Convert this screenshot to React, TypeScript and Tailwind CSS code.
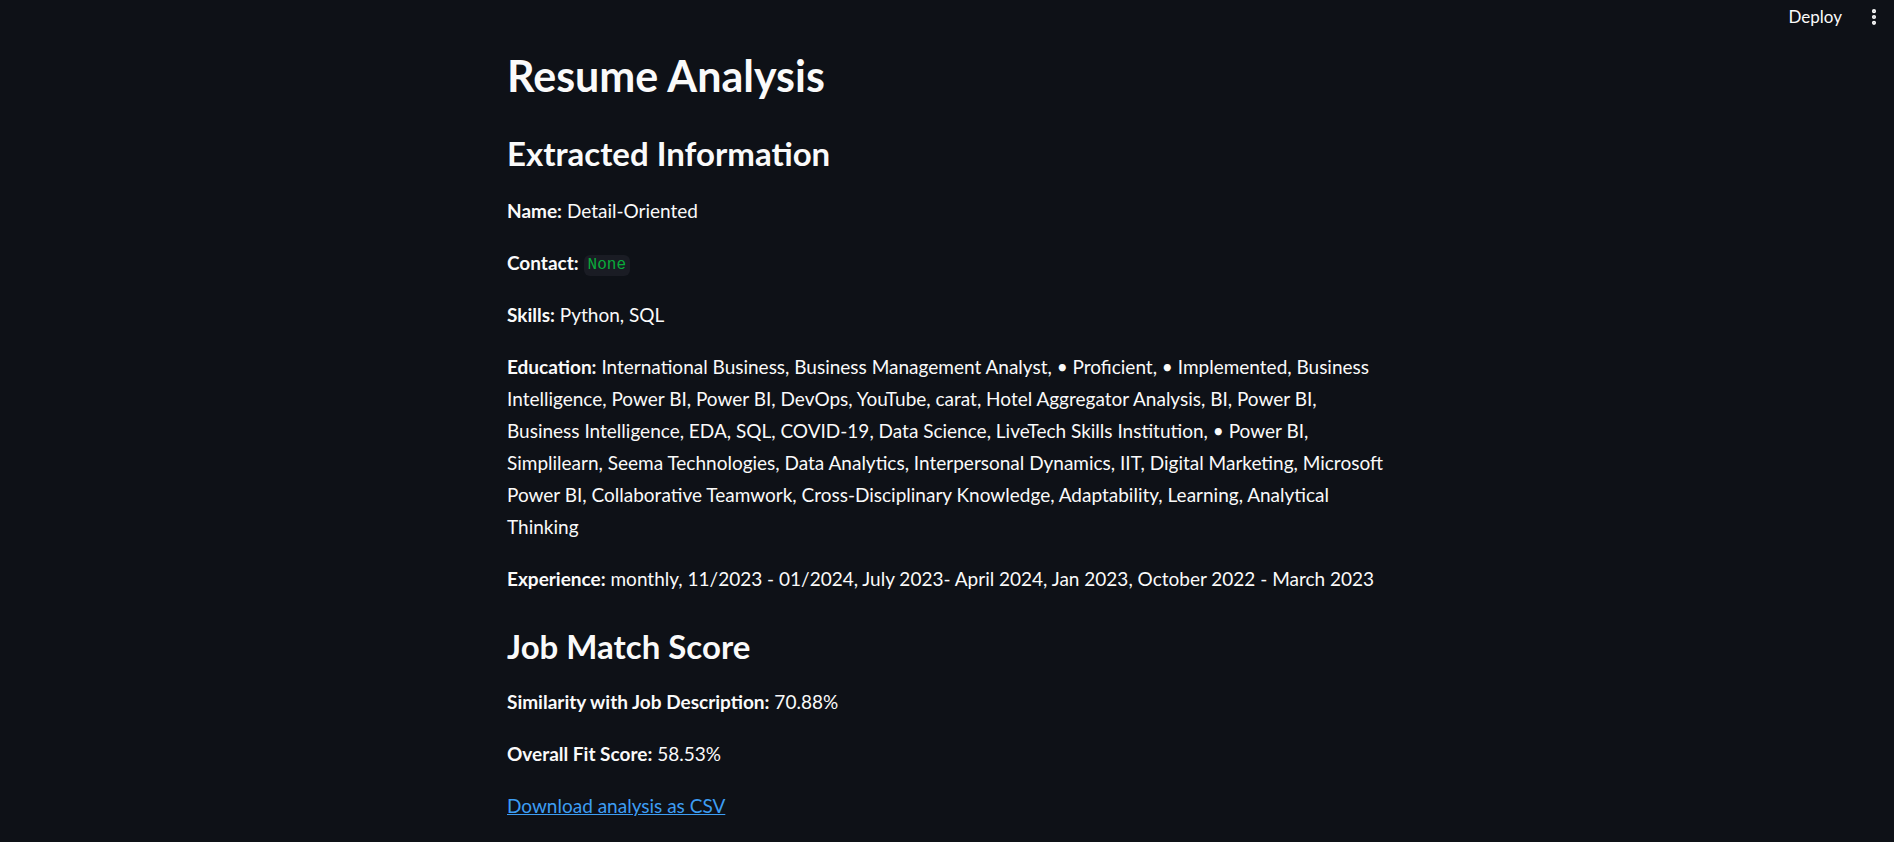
import { EllipsisVertical } from "lucide-react";

const font = { fontFamily: "Lato, 'Noto Sans', sans-serif" };

function Field({ label, children }: { label: string; children: React.ReactNode }) {
  return (
    <p className="text-[19px] leading-[32px] mb-[20px]">
      <b className="font-bold">{label}:</b> {children}
    </p>
  );
}

export default function App() {
  const education =
    "International Business, Business Management Analyst, • Proficient, • Implemented, Business Intelligence, Power BI, Power BI, DevOps, YouTube, carat, Hotel Aggregator Analysis, BI, Power BI, Business Intelligence, EDA, SQL, COVID-19, Data Science, LiveTech Skills Institution, • Power BI, Simplilearn, Seema Technologies, Data Analytics, Interpersonal Dynamics, IIT, Digital Marketing, Microsoft Power BI, Collaborative Teamwork, Cross-Disciplinary Knowledge, Adaptability, Learning, Analytical Thinking";

  return (
    <div className="relative min-h-[842px] bg-[#0e1117] text-[#fafafa]" style={font}>
      <header className="absolute top-0 right-0 flex items-center gap-[22px] h-[34px] pr-[10px]">
        <span className="text-[17px]">Deploy</span>
        <EllipsisVertical className="w-[20px] h-[20px]" strokeWidth={3} />
      </header>

      <main className="w-[880px] mx-auto pt-[50px] pb-10">
        <h1 className="text-[43px] leading-[52px] font-bold">Resume Analysis</h1>

        <h2 className="text-[33px] leading-[40px] font-bold mt-[31px] mb-[22px]">Extracted Information</h2>
        <Field label="Name">Detail-Oriented</Field>
        <Field label="Contact">
          <code
            className="inline-block px-[4px] leading-[21px] rounded-[6px] bg-[#1a1c24] text-[#09ab3b] text-[16px] align-[1px]"
            style={{ fontFamily: "'Liberation Mono', monospace" }}
          >
            None
          </code>
        </Field>
        <Field label="Skills">Python, SQL</Field>
        <Field label="Education">{education}</Field>
        <Field label="Experience">monthly, 11/2023 - 01/2024, July 2023- April 2024, Jan 2023, October 2022 - March 2023</Field>

        <h2 className="text-[33px] leading-[40px] font-bold mt-[31px] mb-[20px]">Job Match Score</h2>
        <Field label="Similarity with Job Description">70.88%</Field>
        <Field label="Overall Fit Score">58.53%</Field>
        <p className="text-[19px] leading-[32px]">
          <a href="#" className="text-[#3d9df3] underline">Download analysis as CSV</a>
        </p>
      </main>
    </div>
  );
}
